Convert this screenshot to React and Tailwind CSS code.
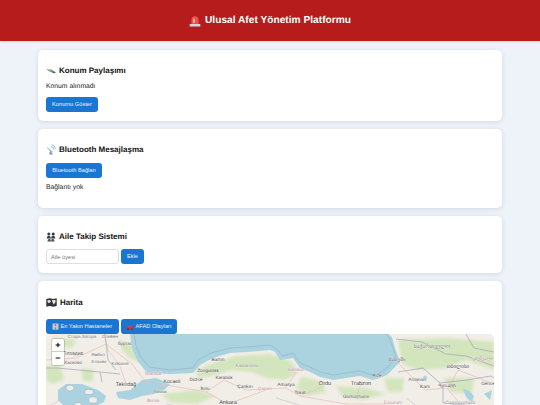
import React from 'react';

const font = 'font-["Liberation_Sans",Arial,sans-serif] [text-rendering:geometricPrecision]';

const SirenIcon = () => (
  <svg width="12" height="12" viewBox="0 0 11 11" className="shrink-0">
    <path d="M2.2 8.2V4.4a3.3 3.3 0 0 1 6.6 0V8.2z" fill="#f2504a" />
    <path d="M3.8 3.4h1.6V7H3.8z" fill="#ffc2b4" />
    <rect x="0.6" y="8.2" width="9.8" height="2.4" rx="0.5" fill="#d3d5da" />
  </svg>
);

const SatelliteIcon = () => (
  <svg width="10" height="10" viewBox="0 0 10 10" className="shrink-0">
    <path d="M0.2 3 L5.5 3.4 L9.8 6.6 L7.5 7.2 L3 5.2z" fill="#6f9a96" />
    <path d="M0.6 2.8 L4.8 3.2 L4.5 4.4 L1.4 3.8z" fill="#d8c77a" />
    <path d="M6 5 L9.8 6.6 L8 7.2z" fill="#34577f" />
  </svg>
);

const AntennaIcon = () => (
  <svg width="10" height="11" viewBox="0 0 10 11" className="shrink-0">
    <path d="M0.6 2.6 Q2.4 8 8 8.6 Z" fill="#b8c6d2" />
    <path d="M4.2 6 L7 10.6 H3.2z" fill="#8b9aa8" />
    <path d="M5 2.6a3 3 0 0 1 3 3M5.5 0.8a4.5 4.5 0 0 1 4 4" stroke="#7cc4e8" strokeWidth="0.9" fill="none" />
  </svg>
);

const FamilyIcon = () => (
  <svg width="10" height="10" viewBox="0 0 10 10" className="shrink-0">
    <circle cx="2.8" cy="2" r="1.5" fill="#333a42" />
    <circle cx="7.2" cy="2" r="1.5" fill="#333a42" />
    <path d="M0.6 6.5 Q0.8 3.8 2.8 3.8 Q4.8 3.8 5 6.5z M5 6.5 Q5.2 3.8 7.2 3.8 Q9.2 3.8 9.4 6.5z" fill="#333a42" />
    <path d="M1.4 9.6 Q1.6 6.8 3.4 6.8 Q5 6.8 5 9.6z M5 9.6 Q5 6.8 6.6 6.8 Q8.4 6.8 8.6 9.6z" fill="#4b535c" />
  </svg>
);

const MapIcon = () => (
  <svg width="11" height="9" viewBox="0 0 11 9" className="shrink-0">
    <path d="M0.3 1 L3.7 0.3 L7.3 1 L10.7 0.3 V8 L7.3 8.7 L3.7 8 L0.3 8.7z" fill="#30343a" />
    <path d="M1.5 2.2 L4 2 L5 3.6 L3 5.2 L1.6 4.2z M6 2 L9.6 2 L9.4 4.6 L7.6 6.4 L6.4 4z" fill="#e8e4d6" />
  </svg>
);

const HospitalIcon = () => (
  <svg width="7" height="7" viewBox="0 0 8 8" className="shrink-0">
    <rect x="0.6" y="0.6" width="6.8" height="7" fill="#c9ccd2" />
    <rect x="2.8" y="2" width="2.4" height="0.9" fill="#e0564f" />
    <rect x="3.55" y="1.2" width="0.9" height="2.4" fill="#e0564f" />
    <rect x="3.2" y="5" width="1.6" height="2.6" fill="#6f93b5" />
  </svg>
);

const CarIcon = () => (
  <svg width="8" height="6" viewBox="0 0 9 7" className="shrink-0">
    <path d="M0.4 4.6 L1.4 2.6 L3 1.2 H6 L7.8 3 L8.6 4.6 V6 H0.4z" fill="#d9343a" />
    <path d="M3.2 1.8 H5.6 L6.6 3 H2.4z" fill="#5d7f9c" />
    <circle cx="2.3" cy="6" r="0.9" fill="#333" />
    <circle cx="6.7" cy="6" r="0.9" fill="#333" />
  </svg>
);

const Card = ({ children, className = '' }) => (
  <section className={`bg-white rounded-[5px] shadow-[0_1px_5px_rgba(40,50,80,0.13)] px-2 ${className}`}>
    {children}
  </section>
);

const Title = ({ icon, children }) => (
  <h3 className="flex items-center gap-[3px] text-[8px] leading-[11px] font-bold text-[#111]">
    {icon}
    <span>{children}</span>
  </h3>
);

const Btn = ({ children, className = '' }) => (
  <button className={`flex items-center justify-center gap-[1px] h-[15px] rounded-[3px] bg-[#1976d2] text-[#eef5fc] text-[5.7px] leading-none ${className}`}>
    {children}
  </button>
);

// static picture of the osm tiles behind the map, coordinates are px inside the map box
const labels = [
  ['Стара Загора', 36, 3.5, 4.6, '#777'],
  ['Сливен', 64, 3.5, 4.6, '#777'],
  ['Бургас', 79, 11, 4.6, '#555'],
  ['Пловдив', 27, 21, 5, '#555'],
  ['Ямбол', 52, 22, 4.4, '#666'],
  ['Хасково', 27, 30, 4.8, '#555'],
  ['Елхово', 53, 29, 4.4, '#666'],
  ['Kırklareli', 74, 31, 4.4, '#666'],
  ['Tekirdağ', 80, 52, 5.4, '#444'],
  ['İstanbul', 107, 41, 4.6, '#b8829a'],
  ['Kocaeli', 126, 49, 5.2, '#444'],
  ['Yalova', 114, 59, 4.4, '#555'],
  ['Bursa', 107, 68, 4.6, '#b8829a'],
  ['Düzce', 150, 47, 4.6, '#444'],
  ['Zonguldak', 162, 38, 4.6, '#444'],
  ['Bartın', 172, 27, 4.8, '#444'],
  ['Karabük', 178, 45, 4.6, '#444'],
  ['Kastamonu', 201, 33, 4.6, '#888'],
  ['Bolu', 159, 56, 4.6, '#555'],
  ['Çankırı', 199, 54, 4.8, '#444'],
  ['Ankara', 182, 70, 5.6, '#444'],
  ['Çorum', 219, 56, 4.6, '#b8829a'],
  ['Samsun', 250, 37, 4.6, '#b8829a'],
  ['Amasya', 240, 52, 4.8, '#444'],
  ['Tokat', 254, 60, 4.6, '#444'],
  ['Ordu', 279, 51, 5.6, '#444'],
  ['Trabzon', 315, 51, 5.6, '#444'],
  ['Gümüşhane', 310, 64, 4.8, '#555'],
  ['Rize', 331, 43, 4.6, '#555'],
  ['საქართველო', 386, 14, 5.6, '#777'],
  ['ბათუმი', 351, 27, 4.8, '#555'],
  ['თბილისი', 412, 34, 5, '#444'],
  ['ცხინვალი', 437, 26, 4.4, '#b8829a'],
  ['Ardahan', 371, 47, 4.6, '#555'],
  ['Kars', 379, 54, 4.8, '#444'],
  ['Գյումրի', 401, 53, 4.4, '#444'],
  ['Gence', 442, 51, 4.6, '#555'],
  ['Erzurum', 347, 70, 4.8, '#b8829a'],
  ['Հայաստան', 414, 70, 5, '#888'],
];

const coast = 'M84 0 L86 14 L91 26 L101 39 L124 40 L147 39 L154 31 L167 24 L184 19 L201 18 L224 16 L229 18 L234 26 L247 24 L254 34 L264 38 L274 43 L287 46 L300 44 L314 42 L327 46 L334 44 L341 41 L354 28 L349 14 L346 3 L342 0z';
const shelf = 'M88 0 Q89 12 94 22 L103 33 L124 36 L147 34 L152 26 L165 19 L184 14 L201 13 L224 11 L232 16 L236 22 L247 19 L254 29 L264 33 L274 38 L287 41 L300 39 L314 37 L327 41 L334 39 L342 33 L350 22 L344 6 L341 0';

const MapTiles = () => (
  <svg className="absolute inset-0" width="448" height="130" viewBox="0 0 448 130">
    <defs>
      <filter id="soft" x="-10%" y="-10%" width="120%" height="120%">
        <feGaussianBlur stdDeviation="1.6" />
      </filter>
      <filter id="line" x="-5%" y="-5%" width="110%" height="110%">
        <feGaussianBlur stdDeviation="0.35" />
      </filter>
    </defs>
    <rect width="448" height="130" fill="#f1eee7" />
    {/* forest patches */}
    <g fill="#d0e4b8" opacity="0.9" filter="url(#soft)">
      <path d="M74 6 L88 12 L96 30 L84 24 L76 16z" />
      <path d="M0 32 L14 30 L18 46 L6 50 L0 46z" />
      <path d="M36 34 L48 36 L46 48 L36 46z" />
      <path d="M8 4 L30 6 L26 14 L10 12z" />
      <path d="M150 36 L170 28 L190 22 L224 20 L246 28 L252 38 L240 46 L220 44 L206 38 L186 36 L166 42 L152 44z" />
      <path d="M256 42 L276 48 L280 58 L262 62 L250 54z" />
      <path d="M352 6 L400 4 L448 8 V36 L420 26 L400 34 L372 36 L356 30z" />
      <path d="M398 44 L428 44 L426 60 L404 58z" />
      <path d="M338 44 L358 44 L356 58 L342 58z" />
      <path d="M116 60 L150 56 L170 62 L150 70 L124 68z" />
      <path d="M290 52 L320 54 L340 60 L316 66 L296 62z" />
    </g>
    {/* sea */}
    <g fill="#aad3df">
      <path d={coast} />
      {/* marmara */}
      <path d="M70 58 L84 56 L96 46 L110 44 L124 50 L118 56 L108 60 L96 62 L84 66 L72 64z" />
      {/* aegean */}
      <path d="M12 56 L20 50 L36 50 L52 56 L60 62 L58 68 L46 74 L20 74 L12 66z" />
      <ellipse cx="379" cy="44" rx="2" ry="2.5" />
      <path d="M417 55 Q424 56 428 62 L426 68 Q420 66 417 55z" />
      <path d="M438 60 L446 56 L444 66z" />
    </g>
    {/* islands */}
    <g fill="#f1eee7" stroke="#8fa9c4" strokeWidth="0.5">
      <ellipse cx="24" cy="54" rx="4" ry="3" />
      <ellipse cx="43" cy="58" rx="4.5" ry="2.6" />
      <ellipse cx="47" cy="66" rx="4.5" ry="3.2" />
      <ellipse cx="32" cy="71" rx="4" ry="2.6" />
    </g>
    <g filter="url(#line)" fill="none">
      {/* roads */}
      <path d="M0 26 L30 24 L60 10 L86 30 L100 48 L126 52 L160 58 L182 70 M160 58 L178 46 L200 56 L240 54 L254 62 L300 70 L346 70 M240 54 L250 38 M254 62 L279 52 M315 50 L310 64 M58 0 L62 16 L74 32 L80 50 M182 70 L220 56 M371 48 L379 56 L401 54 L414 70 M412 36 L402 54 M351 28 L371 48 M412 36 L448 50" stroke="#e9bcb8" strokeWidth="0.7" />
      {/* borders */}
      <path d={shelf} stroke="#8ea4bf" strokeWidth="0.6" opacity="0.8" />
      <path d="M0 34 L11 34 L54 38 L56 48 M54 38 L74 40 M59 0 L62 26 L70 36 M352 38 L377 34 L394 49 L421 46 L445 42 L448 44 M397 51 L397 69 L430 72 M350 5 L376 8 L400 20 L420 22 L448 32 M420 0 L428 14 L448 18" stroke="#a3a0b8" strokeWidth="0.7" />
      <path d="M0 74 L14 66 M120 70 L160 78 M230 64 L270 76 L300 74 M360 64 L376 76" stroke="#bcb6c6" strokeWidth="0.5" />
    </g>
    {labels.map(([text, x, y, size, fill]) => (
      <text key={text} x={x} y={y} fontSize={size} fill={fill} textAnchor="middle" stroke="#ffffff" strokeOpacity="0.7" strokeWidth="0.6" paintOrder="stroke" fontFamily="Liberation Sans, Noto Sans, DejaVu Sans, sans-serif">
        {text}
      </text>
    ))}
  </svg>
);

export default function App() {
  return (
    <div className={`${font} h-[405px] overflow-hidden bg-[#eef2f9] text-[#111]`}>
      <header className="h-[41px] bg-[#b71c1c] shadow-[0_1px_2px_rgba(0,0,0,0.12)] flex items-center justify-center gap-[4px] text-white text-[10.2px] font-bold">
        <SirenIcon />
        <span>Ulusal Afet Yönetim Platformu</span>
      </header>

      <main className="mx-[38px] mt-[9px] flex flex-col gap-[8px]">
        <Card className="h-[71px] pt-[15px]">
          <Title icon={<SatelliteIcon />}>Konum Paylaşımı</Title>
          <p className="mt-[6px] text-[6.8px] leading-[10px] text-[#222]">Konum alınmadı</p>
          <Btn className="mt-[5px] w-[52px]">Konumu Göster</Btn>
        </Card>

        <Card className="h-[79px] pt-[15px]">
          <Title icon={<AntennaIcon />}>Bluetooth Mesajlaşma</Title>
          <Btn className="mt-[8px] w-[56px]">Bluetooth Bağlan</Btn>
          <p className="mt-[5px] text-[6.8px] leading-[10px] text-[#222]">Bağlantı yok</p>
        </Card>

        <Card className="h-[57px] pt-[15px]">
          <Title icon={<FamilyIcon />}>Aile Takip Sistemi</Title>
          <div className="mt-[7px] flex gap-[2px]">
            <input
              placeholder="Aile üyesi"
              className="h-[15px] w-[73px] rounded-[3px] border border-[#dcdfe4] bg-white px-[4px] text-[5.7px] placeholder:text-[#777] outline-none"
            />
            <Btn className="w-[23px]">Ekle</Btn>
          </div>
        </Card>

        <Card className="h-[200px] pt-[16px]">
          <Title icon={<MapIcon />}>Harita</Title>
          <div className="mt-[11px] flex gap-[2.5px]">
            <Btn className="w-[72.5px]"><HospitalIcon />En Yakın Hastaneler</Btn>
            <Btn className="w-[56px]"><CarIcon />AFAD Olayları</Btn>
          </div>
          <div className="relative h-[130px] overflow-hidden rounded-[5px]">
            <MapTiles />
            <div className="absolute left-[6px] top-[5px] flex w-[12px] flex-col overflow-hidden rounded-[2px] bg-white text-[9px] font-bold leading-[12px] text-black shadow-[0_0_0_1px_rgba(0,0,0,0.15)]">
              <span className="h-[13px] border-b border-[#ccc] text-center">+</span>
              <span className="h-[13px] text-center">−</span>
            </div>
          </div>
        </Card>
      </main>
    </div>
  );
}
